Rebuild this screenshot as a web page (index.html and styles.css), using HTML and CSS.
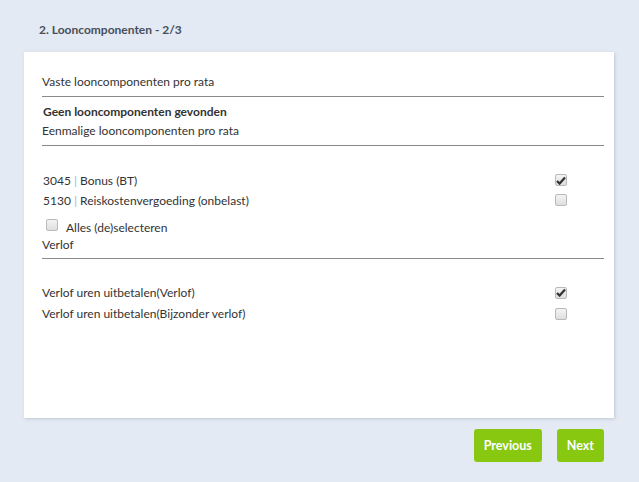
FILE: index.html
```html
<!DOCTYPE html>
<html lang="nl">
<head>
    <meta charset="UTF-8">
    <meta name="viewport" content="width=device-width, initial-scale=1.0">
    <title>Looncomponenten</title>
    <link rel="stylesheet" href="styles.css">
</head>
<body>

    <h2 class="step-title">2. Looncomponenten - 2/3</h2>

    <div class="card">
        <div class="section-title">Vaste looncomponenten pro rata</div>
        <div class="empty">Geen looncomponenten gevonden</div>

        <div class="section-title tight">Eenmalige looncomponenten pro rata</div>
        <div class="rows">
            <label class="row">
                <span>3045 <span class="sep">|</span> Bonus (BT)</span>
                <span class="check checked"><svg width="10" height="9" viewBox="0 0 10 9"><path d="M1 5 L3.6 7.6 L9 1.5" fill="none" stroke="#333" stroke-width="2.2"/></svg></span>
            </label>
            <label class="row">
                <span>5130 <span class="sep">|</span> Reiskostenvergoeding (onbelast)</span>
                <span class="check"></span>
            </label>
        </div>
        <label class="select-all">
            <span class="check"></span>
            <span>Alles (de)selecteren</span>
        </label>

        <div class="section-title flat">Verlof</div>
        <div class="rows">
            <label class="row">
                <span>Verlof uren uitbetalen(Verlof)</span>
                <span class="check checked"><svg width="10" height="9" viewBox="0 0 10 9"><path d="M1 5 L3.6 7.6 L9 1.5" fill="none" stroke="#333" stroke-width="2.2"/></svg></span>
            </label>
            <label class="row">
                <span>Verlof uren uitbetalen(Bijzonder verlof)</span>
                <span class="check"></span>
            </label>
        </div>
    </div>

    <div class="actions">
        <button type="button" class="btn">Previous</button>
        <button type="button" class="btn">Next</button>
    </div>

</body>
</html>
```

FILE: styles.css
```css
body {
    font-family: Lato, "Open Sans", Arial, sans-serif;
    font-size: 12px;
    color: #333;
    background-color: #e4eaf3;
    margin: 0;
}

.step-title {
    margin: 0;
    padding: 21px 0 0 39px;
    height: 52px;
    box-sizing: border-box;
    font-size: 12px;
    font-weight: 700;
    line-height: 18px;
    color: #474f5a;
}

.card {
    background-color: white;
    margin: 0 25px 0 24px;
    height: 366px;
    box-sizing: border-box;
    padding: 21px 10px 0 18px;
    box-shadow: 1px 1px 3px rgba(120, 140, 170, 0.35);
}

.section-title {
    line-height: 18px;
    padding-bottom: 5px;
    border-bottom: 1px solid #8a8a8a;
}

.section-title.tight {
    line-height: 19px;
    padding-bottom: 5px;
}

.section-title.flat {
    padding-bottom: 4px;
}

.empty {
    font-weight: 700;
    line-height: 18px;
    margin-top: 6px;
    padding-left: 1px;
}

.rows {
    margin-top: 24px;
    padding-left: 1px;
}

.section-title.flat + .rows {
    margin-top: 23px;
    padding-left: 0;
}

.row {
    display: flex;
    justify-content: space-between;
    align-items: center;
    height: 20px;
    padding-right: 37px;
}

.section-title.flat + .rows .row {
    height: 21px;
}

.sep {
    color: #8cbbe3;
}

.check {
    width: 10px;
    height: 10px;
    border: 1px solid #b9b9b9;
    border-radius: 2px;
    background: linear-gradient(#f4f4f4, #dedede);
    display: flex;
    align-items: center;
    justify-content: center;
}

.select-all {
    display: flex;
    align-items: center;
    gap: 8px;
    height: 18px;
    margin-top: 8px;
    padding-left: 4px;
}

.select-all .check {
    margin-top: -5px;
}

.actions {
    display: flex;
    justify-content: flex-end;
    gap: 15px;
    padding: 11px 35px 0 0;
}

.btn {
    height: 33px;
    padding: 0 10px;
    background-color: #88c811;
    color: white;
    border: none;
    border-radius: 3px;
    font-family: Lato, "Open Sans", Arial, sans-serif;
    font-size: 12.5px;
    font-weight: 700;
    cursor: pointer;
}

.btn:hover {
    background-color: #7ab40c;
}
```
